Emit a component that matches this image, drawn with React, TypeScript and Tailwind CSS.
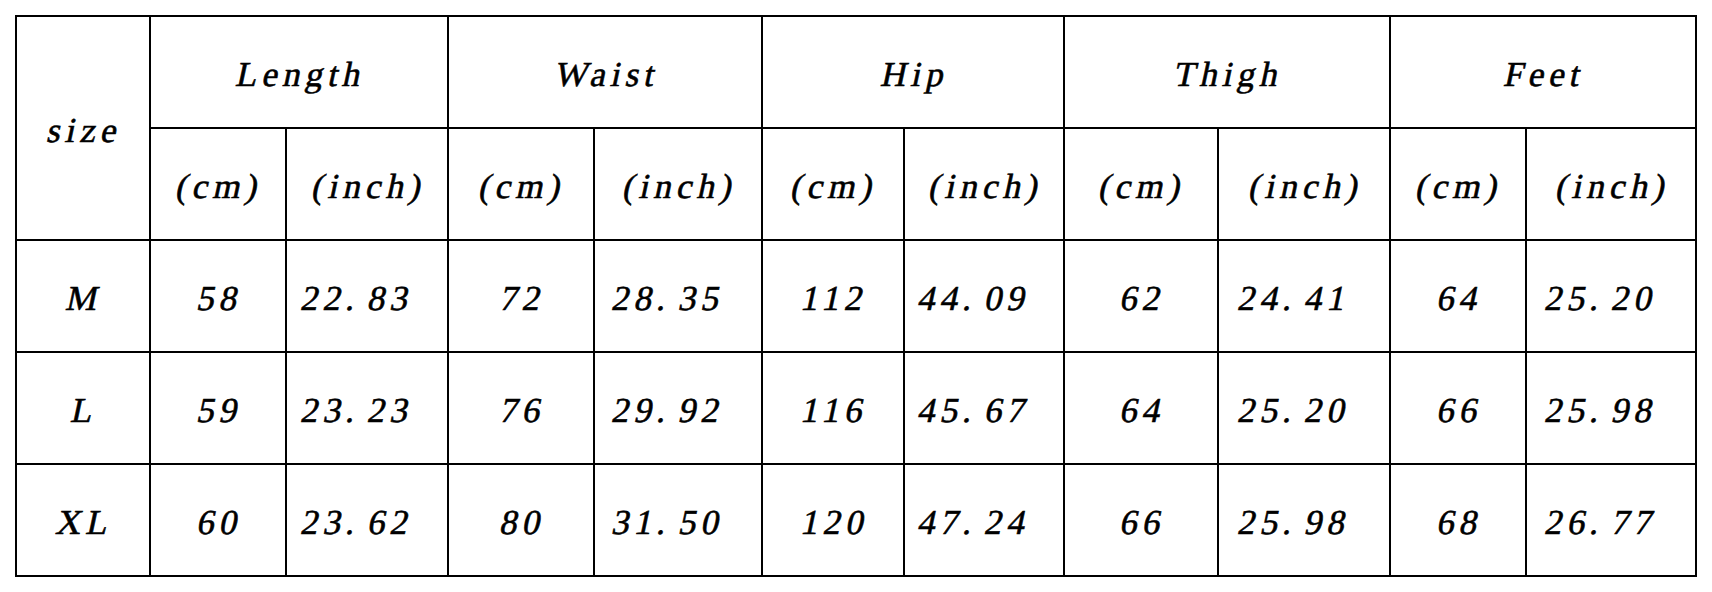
import React from "react"

const groups = ["Length", "Waist", "Hip", "Thigh", "Feet"]

const rows: { size: string; values: string[] }[] = [
  { size: "M", values: ["58", "22.83", "72", "28.35", "112", "44.09", "62", "24.41", "64", "25.20"] },
  { size: "L", values: ["59", "23.23", "76", "29.92", "116", "45.67", "64", "25.20", "66", "25.98"] },
  { size: "XL", values: ["60", "23.62", "80", "31.50", "120", "47.24", "66", "25.98", "68", "26.77"] },
]

// period gets a wider cell, like the half-width font in the chart
function Num({ text }: { text: string }) {
  const [a, b] = text.split(".")
  if (b === undefined) return <>{text}</>
  return (
    <>
      {a}
      <span className="mr-[8px]">.</span>
      {b}
    </>
  )
}

function Cell({ children, className = "" }: { children: React.ReactNode; className?: string }) {
  return (
    <div className={`flex items-center justify-center bg-white pt-[6px] ${className}`}>
      {/* slanted roman, not a true italic face */}
      <span className="inline-block -skew-x-12 whitespace-nowrap">{children}</span>
    </div>
  )
}

export default function App() {
  return (
    <div className="min-h-[592px] bg-white pl-[15px] pt-[15px] [font-family:Liberation_Serif,serif] text-[35px] tracking-[5px] text-black [-webkit-text-stroke:0.6px_black]">
      <div className="grid w-fit grid-cols-[132px_134px_160px_144px_166px_140px_158px_152px_170px_134px_168px] grid-rows-[repeat(5,110px)] gap-[2px] bg-black p-[2px]">
        <Cell className="row-span-2 pl-[5px]">size</Cell>
        {groups.map((g) => (
          <Cell key={g} className="col-span-2 pl-[5px]">
            {g}
          </Cell>
        ))}
        {groups.map((g) => (
          <React.Fragment key={g + "-u"}>
            <Cell className="pl-[5px]">(cm)</Cell>
            <Cell className="pl-[5px]">(inch)</Cell>
          </React.Fragment>
        ))}
        {rows.map((r) => (
          <React.Fragment key={r.size}>
            <Cell className="pl-[5px]">{r.size}</Cell>
            {r.values.map((v, i) => (
              <Cell key={i} className={i % 2 === 0 ? "pl-[5px]" : "pr-[19px]"}>
                <Num text={v} />
              </Cell>
            ))}
          </React.Fragment>
        ))}
      </div>
    </div>
  )
}
